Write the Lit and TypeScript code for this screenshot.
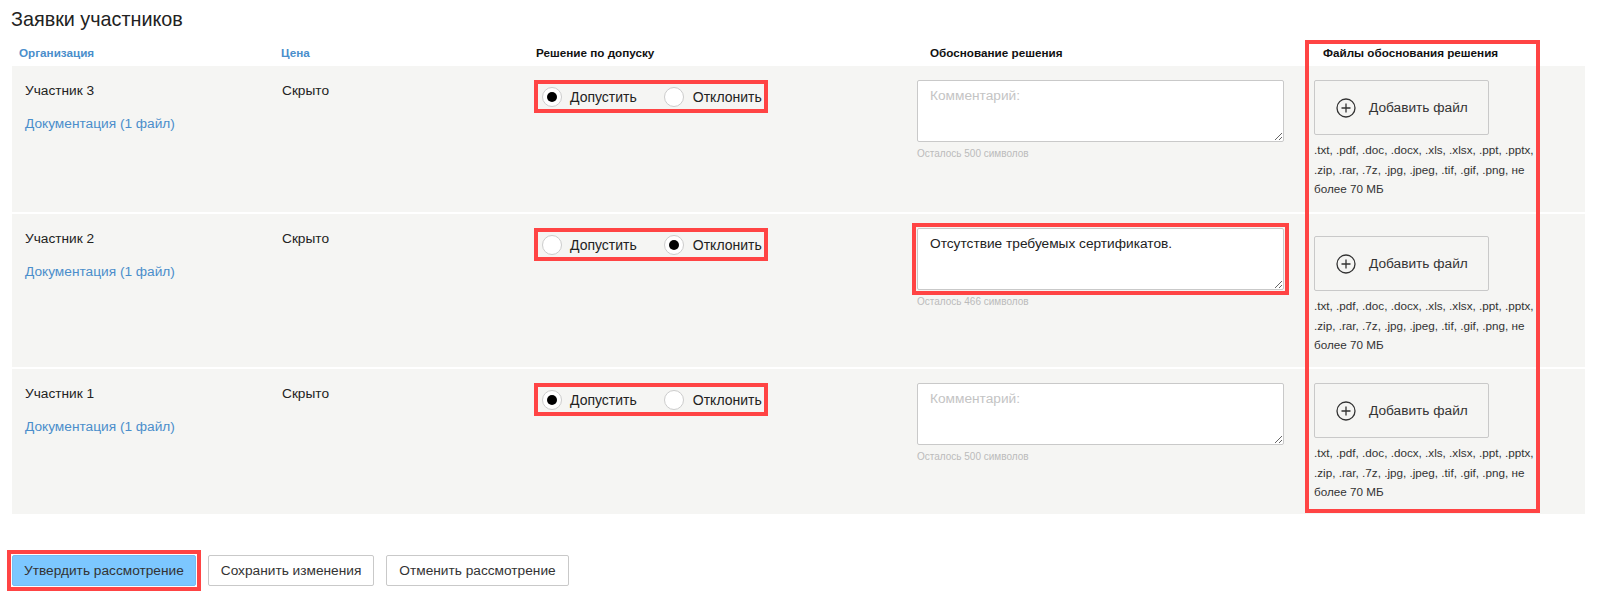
import { LitElement, html, css } from "lit";
import { customElement } from "lit/decorators.js";

const HINT = ".txt, .pdf, .doc, .docx, .xls, .xlsx, .ppt, .pptx, .zip, .rar, .7z, .jpg, .jpeg, .tif, .gif, .png, не более 70 МБ";

interface Row { name: string; choice: "yes" | "no"; text: string; left: number; cls: string; }

const ROWS: Row[] = [
  { name: "Участник 3", choice: "yes", text: "", left: 500, cls: "r1" },
  { name: "Участник 2", choice: "no", text: "Отсутствие требуемых сертификатов.", left: 466, cls: "r2" },
  { name: "Участник 1", choice: "yes", text: "", left: 500, cls: "r3" },
];

@customElement("app-root")
export class AppRoot extends LitElement {
  static styles = css`
    :host { display: block; height: 597px; overflow: hidden; background: #fff; color: #222;
      font-family: "Liberation Sans", Arial, sans-serif; font-size: 13.7px; }
    * { box-sizing: border-box; }
    .title { margin: 0; height: 40px; padding: 9px 0 0 11px; font-size: 19.8px; line-height: 20px; font-weight: 400; }
    .table { position: relative; margin-left: 12px; width: 1573px; }
    .cols { display: grid; grid-template-columns: 269px 253px 383px 397px 271px; }
    .head { height: 26px; font-size: 11.7px; font-weight: 700; line-height: 26px; color: #111; }
    .head .blue { color: #4a8ecb; }
    .h1 { padding-left: 7px; }
    .h2 { padding-left: 0; }
    .h3 { padding-left: 2px; }
    .h4 { padding-left: 13px; }
    .h5 { padding-left: 9px; }
    .row { background: #f5f5f3; margin-bottom: 2px; }
    .row:last-of-type { margin-bottom: 0; }
    .r1 { height: 146px; }
    .r2 { height: 153px; }
    .r3 { height: 145px; }
    .org { padding: 16px 0 0 13px; line-height: 18px; }
    .org a { display: block; margin-top: 15px; color: #4a8ecb; text-decoration: none; }
    .price { padding: 16px 0 0 1px; line-height: 18px; }
    .decision { padding-top: 14px; }
    .radios { display: flex; align-items: center; width: 234px; height: 33px; border: 4px solid #ff4444;
      padding-left: 4px; font-size: 14px; }
    .opt { display: flex; align-items: center; gap: 8px; }
    .opt + .opt { margin-left: 27px; gap: 9px; }
    .dot { width: 20px; height: 20px; border-radius: 50%; background: #fff; border: 1px solid #ccc;
      display: flex; align-items: center; justify-content: center; }
    .dot.on::after { content: ""; width: 10px; height: 10px; border-radius: 50%; background: #000; }
    .reason { padding-top: 14px; }
    .box { position: relative; width: 367px; height: 62px; }
    .box.marked::after { content: ""; position: absolute; inset: -5px; border: 4px solid #ff4444; pointer-events: none; }
    textarea { display: block; width: 367px; height: 62px; margin: 0; padding: 6px 12px; border: 1px solid #c9c9c9; border-radius: 2px;
      background: #fff; font: 13.7px/18px "Liberation Sans", Arial, sans-serif; color: #222; outline: none; }
    textarea::placeholder { color: #c4c4c4; opacity: 1; }
    .left { margin-top: 5px; font-size: 10px; line-height: 14px; color: #bbb; }
    .files { padding-top: 14px; }
    .r2 .files { padding-top: 22px; }
    .add { display: flex; align-items: center; width: 175px; height: 55px; padding: 0 0 0 21px; gap: 13px; background: transparent;
      border: 1px solid #c9c9c9; border-radius: 2px; font: 13.7px "Liberation Sans", Arial, sans-serif; color: #333; }
    .add svg { display: block; flex: none; }
    .hint { width: 228px; margin-top: 5px; font-size: 11.7px; line-height: 19.7px; color: #333; }
    .frame { position: absolute; left: 1293px; top: 0; width: 235px; height: 473px; border: 4px solid #ff4444; pointer-events: none; }
    .actions { display: flex; gap: 12px; padding: 39px 0 0 12px; }
    .btn { position: relative; height: 31px; padding: 0 12px; background: #fff; border: 1px solid #c9c9c9; border-radius: 2px;
      font: 13.7px "Liberation Sans", Arial, sans-serif; color: #333; }
    .btn.primary { padding: 0 11px; background: #7cc7ff; border-color: #74bdf2; }
    .btn.primary::after { content: ""; position: absolute; inset: -6px; border: 4px solid #ff4444; pointer-events: none; }
  `;

  private row(r: Row) {
    return html`
      <div class="row cols ${r.cls}">
        <div class="org">${r.name}<a href="#">Документация (1 файл)</a></div>
        <div class="price">Скрыто</div>
        <div class="decision">
          <div class="radios">
            <div class="opt"><span class="dot ${r.choice === "yes" ? "on" : ""}"></span>Допустить</div>
            <div class="opt"><span class="dot ${r.choice === "no" ? "on" : ""}"></span>Отклонить</div>
          </div>
        </div>
        <div class="reason">
          <div class="box ${r.text ? "marked" : ""}">
            <textarea placeholder="Комментарий:" .value=${r.text}></textarea>
          </div>
          <div class="left">Осталось ${r.left} символов</div>
        </div>
        <div class="files">
          <button class="add">
            <svg width="20" height="20" viewBox="0 0 20 20" fill="none" stroke="#333" stroke-width="1.3">
              <circle cx="10" cy="10" r="9"></circle>
              <path d="M10 5.5v9M5.5 10h9"></path>
            </svg>
            Добавить файл
          </button>
          <div class="hint">${HINT}</div>
        </div>
      </div>`;
  }

  render() {
    return html`
      <h1 class="title">Заявки участников</h1>
      <div class="table">
        <div class="head cols">
          <div class="h1 blue">Организация</div>
          <div class="h2 blue">Цена</div>
          <div class="h3">Решение по допуску</div>
          <div class="h4">Обоснование решения</div>
          <div class="h5">Файлы обоснования решения</div>
        </div>
        ${ROWS.map((r) => this.row(r))}
        <div class="frame"></div>
      </div>
      <div class="actions">
        <button class="btn primary">Утвердить рассмотрение</button>
        <button class="btn">Сохранить изменения</button>
        <button class="btn">Отменить рассмотрение</button>
      </div>`;
  }
}
